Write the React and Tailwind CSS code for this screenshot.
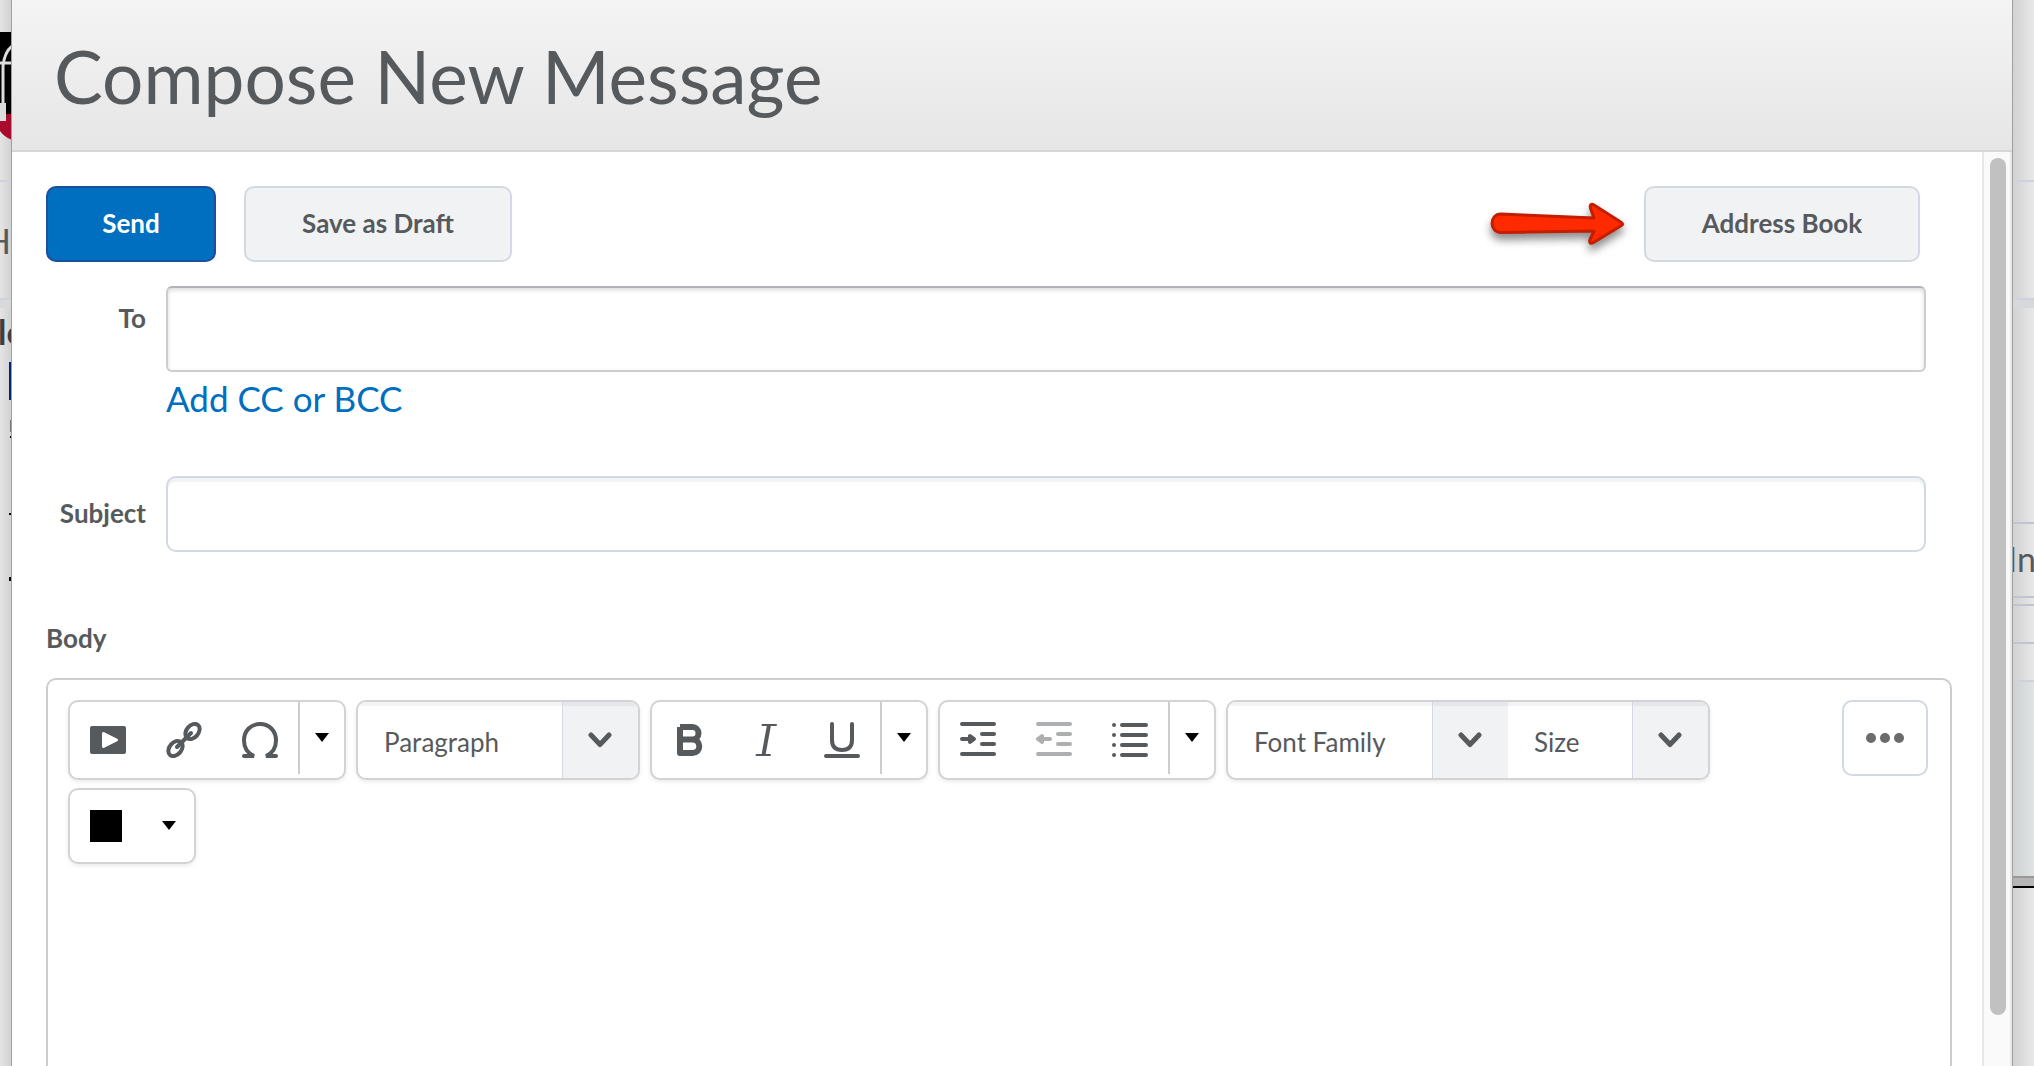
import React, { useState } from "react";

const Caret = () => (
  <svg width="14" height="10" viewBox="0 0 14 10" aria-hidden="true">
    <path d="M0 0h14L7 9z" fill="#000" />
  </svg>
);

const Chevron = () => (
  <svg width="24" height="16" viewBox="0 0 24 16" fill="none" aria-hidden="true">
    <path
      d="M3 3l9 9.500L21 3"
      stroke="#565a5c"
      strokeWidth="5"
      strokeLinecap="round"
      strokeLinejoin="round"
    />
  </svg>
);

const PlayIcon = () => (
  <svg width="36" height="36" viewBox="0 0 36 36" aria-hidden="true">
    <rect y="4" width="36" height="28" rx="2" fill="#565a5c" />
    <path
      d="M13.500 11.500v13l13-6.500z"
      fill="#fff"
      stroke="#fff"
      strokeWidth="3"
      strokeLinejoin="round"
    />
  </svg>
);

const LinkIcon = () => (
  <svg
    width="36"
    height="36"
    viewBox="0 0 36 36"
    fill="none"
    stroke="#565a5c"
    strokeWidth="4"
    aria-hidden="true"
  >
    <ellipse cx="26.500" cy="9.500" rx="6" ry="8.500" transform="rotate(40 26.500 9.500)" />
    <ellipse cx="9.500" cy="26.500" rx="6" ry="8.500" transform="rotate(40 9.500 26.500)" />
    <path d="M11 25L25 11" strokeLinecap="round" />
  </svg>
);

const OmegaIcon = () => (
  <svg
    width="36"
    height="36"
    viewBox="0 0 36 36"
    fill="none"
    stroke="#565a5c"
    strokeWidth="4"
    strokeLinecap="round"
    aria-hidden="true"
  >
    <path d="M2 34h10C5 31 2 25 2 18.500 2 8.500 9 2 18 2s16 6.500 16 16.500C34 25 31 31 24 34h10" />
  </svg>
);

const BoldIcon = () => (
  <svg width="36" height="36" viewBox="0 0 36 36" fill="none" aria-hidden="true">
    <path
      d="M8 5h12.500a6 6.200 0 0 1 0 12.400H8M20.500 17.400a6.800 6.800 0 0 1 0 13.600H8V5"
      stroke="#565a5c"
      strokeWidth="6"
      strokeLinejoin="round"
    />
  </svg>
);

const ItalicIcon = () => (
  <svg width="36" height="36" viewBox="0 0 36 36" fill="none" stroke="#565a5c" aria-hidden="true">
    <path d="M14.500 3H28M8.500 33H22" strokeWidth="2" strokeLinecap="round" />
    <path d="M21 3l-5.500 30" strokeWidth="4" />
  </svg>
);

const UnderlineIcon = () => (
  <svg
    width="36"
    height="36"
    viewBox="0 0 36 36"
    fill="none"
    stroke="#565a5c"
    strokeWidth="4"
    strokeLinecap="round"
    aria-hidden="true"
  >
    <path d="M2 34h32M8 2v16c0 7 3.500 10 10 10s10-3 10-10V2" />
  </svg>
);

const IndentIcon = () => (
  <svg width="36" height="36" viewBox="0 0 36 36" fill="none" stroke="#565a5c" aria-hidden="true">
    <path d="M2 2h32M22 12h12M22 22h12M2 32h32M2 17h8" strokeWidth="4" strokeLinecap="round" />
    <path d="M10 14v6l4-3z" fill="#565a5c" strokeWidth="4" strokeLinejoin="round" />
  </svg>
);

const OutdentIcon = () => (
  <svg width="36" height="36" viewBox="0 0 36 36" fill="none" stroke="#adafb0" aria-hidden="true">
    <path d="M2 2h32M22 12h12M22 22h12M2 32h32M6 17h8" strokeWidth="4" strokeLinecap="round" />
    <path d="M6 14v6l-4-3z" fill="#adafb0" strokeWidth="4" strokeLinejoin="round" />
  </svg>
);

const ListIcon = () => (
  <svg
    width="36"
    height="36"
    viewBox="0 0 36 36"
    stroke="#565a5c"
    strokeWidth="4"
    strokeLinecap="round"
    aria-hidden="true"
  >
    <path d="M10 3h24M10 13h24M10 23h24M10 33h24M2 3h0M2 13h0M2 23h0M2 33h0" />
  </svg>
);

const ArrowMark = () => (
  <svg className="mr-4 overflow-visible" width="138" height="48" viewBox="0 0 138 48" aria-hidden="true">
    <path
      d="M11 14L104 18l-3.500-9.500c-1-4 1-5 3.500-3.500l27.500 17.500c1.500 1.500 1.500 2 0 3L103.500 42.500c-3 2-4.500 0-3.500-3l4-8.500-93 1.500c-12 0-12-18.500 0-18.500z"
      fill="#ff2a00"
      stroke="#c41d00"
      strokeWidth="3"
      strokeLinejoin="round"
      className="drop-shadow-[0_6px_4px_rgba(0,0,0,0.45)]"
    />
  </svg>
);

const ToolbarGroup = ({ children }) => (
  <div className="flex h-20 overflow-hidden rounded-[10px] border-2 border-[#d3d3d3] bg-white shadow-[0_2px_4px_rgba(0,0,0,0.08)]">
    {children}
  </div>
);

const ToolButton = ({ label, children, disabled }) => (
  <button
    type="button"
    aria-label={label}
    disabled={disabled}
    className="flex w-[76px] items-center justify-center"
  >
    {children}
  </button>
);

const MoreButton = ({ label }) => (
  <button
    type="button"
    aria-label={label}
    className="mb-1 flex w-[46px] items-center justify-center border-l-2 border-[#cdcdcd]"
  >
    <Caret />
  </button>
);

const ToolSelect = ({ label, width }) => (
  <div className="grid shadow-[inset_0_4px_0_#f1f3f5]">
    <select
      aria-label={label}
      className={`col-start-1 row-start-1 appearance-none bg-transparent pt-1 pl-[26px] text-[26px] text-[#565a5c] ${width}`}
    >
      <option>{label}</option>
    </select>
    <span className="pointer-events-none col-start-1 row-start-1 flex w-[76px] items-center justify-center justify-self-end border-l border-[#d3d9e3] bg-[#f1f2f4] pr-0.5 shadow-[inset_0_4px_0_#e6e7eb]">
      <Chevron />
    </span>
  </div>
);

const buttonBase = "h-[76px] rounded-[10px] border-2 pb-0.5 text-[26px] font-bold";

const App = () => {
  const [to, setTo] = useState("");
  const [subject, setSubject] = useState("");

  return (
    <div className="flex h-screen overflow-hidden bg-[#e5e5e5] font-[Lato,sans-serif] text-[#565a5c]">
      {/* Page behind, left edge */}
      <div className="flex w-3 shrink-0 flex-col overflow-hidden border-r border-[#a0a0a0] bg-linear-to-r from-[#e4e4e4] to-[#d2d2d2]">
        <svg className="mt-8 shrink-0" width="12" height="108" viewBox="0 0 12 108" aria-hidden="true">
          <path d="M0 0h12v82H0z" fill="#000" />
          <path d="M0 82h12v26C7 106 3 103 0 99z" fill="#a80b2c" />
          <path d="M3 72V34C4 24 7 18 12 14M0 31h12" stroke="#dcdcdc" strokeWidth="3" fill="none" />
          <path d="M0 71h6v18H0z" fill="#dcdcdc" />
        </svg>
        <div className="mt-10 h-[120px] shrink-0 border-y-2 border-[#cfd2dc]">
          <div className="flex h-full items-center justify-end text-[34px]">H</div>
        </div>
        <div className="h-2 shrink-0 bg-[#d6d8da]" />
        <div className="mb-2 -ml-0.5 flex h-[46px] shrink-0 items-center text-[34px] font-bold text-[#3c3e40]">
          le
        </div>
        <div className="h-[38px] w-0.5 shrink-0 self-end bg-[#00237c]" />
        <div className="mt-5 h-3 w-px shrink-0 self-end bg-[#777]" />
        <div className="mt-1 h-0.5 w-px shrink-0 self-end bg-black" />
        <div className="mt-[75px] h-0.5 w-0.5 shrink-0 self-end bg-black" />
        <div className="mt-[62px] h-1 w-0.5 shrink-0 self-end bg-black" />
      </div>

      {/* Compose dialog */}
      <main className="flex min-w-0 flex-1 flex-col bg-white">
        <header className="flex h-[152px] shrink-0 items-center border-b-2 border-[#d6d6d6] bg-linear-to-b from-[#f4f4f4] to-[#e6e6e6] pt-0.5 pl-[42px]">
          <h1 className="text-[73px] leading-[88px]">Compose New Message</h1>
        </header>

        <div className="flex min-h-0 flex-1">
          <form className="flex min-w-0 flex-1 flex-col pt-[34px] pr-[30px] pl-[34px]">
            <div className="flex items-center pr-8">
              <button
                type="button"
                className={`${buttonBase} w-[170px] border-[#1c4f9c] bg-[#006fbf] text-white`}
              >
                Send
              </button>
              <button
                type="button"
                className={`${buttonBase} ml-7 w-[268px] border-[#d3d9e3] bg-[#f1f2f4]`}
              >
                Save as Draft
              </button>
              <div className="ml-auto flex items-center">
                <ArrowMark />
                <button
                  type="button"
                  className={`${buttonBase} w-[276px] border-[#d3d9e3] bg-[#f1f2f4]`}
                >
                  Address Book
                </button>
              </div>
            </div>

            <div className="mt-6 grid grid-cols-[100px_1fr] gap-x-5 pr-[26px]">
              <label htmlFor="to" className="pt-4 text-right text-[26px] leading-8 font-bold">
                To
              </label>
              <div>
                <input
                  id="to"
                  value={to}
                  onChange={(e) => setTo(e.target.value)}
                  className="block h-[86px] w-full rounded-md border-2 border-[#cdcdcd] border-t-[#b1b2b7] px-4 text-[26px] shadow-[inset_0_2px_4px_rgba(0,0,0,0.15)] outline-none"
                />
                <a href="#cc" className="mt-1.5 mb-0.5 inline-block text-[35px] leading-10 text-[#006fbf]">
                  Add CC or BCC
                </a>
              </div>
              <label
                htmlFor="subject"
                className="mt-14 self-center pb-0.5 text-right text-[26px] leading-8 font-bold"
              >
                Subject
              </label>
              <input
                id="subject"
                value={subject}
                onChange={(e) => setSubject(e.target.value)}
                className="mt-14 block h-[76px] w-full rounded-[10px] border-2 border-[#d3d9e3] px-4 text-[26px] shadow-[inset_0_4px_0_#f1f3f5] outline-none"
              />
            </div>

            <h2 className="mt-[70px] text-[26px] leading-8 font-bold">Body</h2>
            <div className="mt-6 flex flex-1 items-start justify-between rounded-t-[10px] border-2 border-b-0 border-[#cdcdcd] pt-5 pr-[22px] pl-5">
              <div className="flex flex-wrap gap-x-[10px] gap-y-2">
                <ToolbarGroup>
                  <ToolButton label="Insert stuff">
                    <PlayIcon />
                  </ToolButton>
                  <ToolButton label="Insert link">
                    <LinkIcon />
                  </ToolButton>
                  <ToolButton label="Insert symbol">
                    <OmegaIcon />
                  </ToolButton>
                  <MoreButton label="More insert options" />
                </ToolbarGroup>
                <ToolbarGroup>
                  <ToolSelect label="Paragraph" width="w-[280px]" />
                </ToolbarGroup>
                <ToolbarGroup>
                  <ToolButton label="Bold">
                    <BoldIcon />
                  </ToolButton>
                  <ToolButton label="Italic">
                    <ItalicIcon />
                  </ToolButton>
                  <ToolButton label="Underline">
                    <UnderlineIcon />
                  </ToolButton>
                  <MoreButton label="More text options" />
                </ToolbarGroup>
                <ToolbarGroup>
                  <ToolButton label="Indent">
                    <IndentIcon />
                  </ToolButton>
                  <ToolButton label="Outdent" disabled>
                    <OutdentIcon />
                  </ToolButton>
                  <ToolButton label="Bulleted list">
                    <ListIcon />
                  </ToolButton>
                  <MoreButton label="More list options" />
                </ToolbarGroup>
                <ToolbarGroup>
                  <ToolSelect label="Font Family" width="w-[280px]" />
                  <ToolSelect label="Size" width="w-[200px]" />
                </ToolbarGroup>
                <button
                  type="button"
                  aria-label="Text colour"
                  className="flex h-[76px] w-32 items-center justify-between rounded-[10px] border-2 border-[#d3d3d3] pr-[18px] pl-5 shadow-[0_2px_4px_rgba(0,0,0,0.08)]"
                >
                  <span className="h-8 w-8 bg-black" />
                  <Caret />
                </button>
              </div>
              <button
                type="button"
                aria-label="More actions"
                className="flex h-[76px] w-[86px] shrink-0 items-center justify-center gap-1 rounded-[10px] border-2 border-[#d3d9e3]"
              >
                <span className="h-[10px] w-[10px] rounded-full bg-[#6b6b6b]" />
                <span className="h-[10px] w-[10px] rounded-full bg-[#6b6b6b]" />
                <span className="h-[10px] w-[10px] rounded-full bg-[#6b6b6b]" />
              </button>
            </div>
          </form>

          {/* Scrollbar */}
          <div className="w-[30px] shrink-0 border-r-2 border-l-2 border-[#e8e8e8] bg-[#fafafa] pt-[6px] pr-1 pl-[6px]">
            <div className="h-[94.4%] rounded-full bg-[#c1c1c1]" />
          </div>
        </div>
      </main>

      {/* Page behind, right edge */}
      <div className="flex w-[22px] shrink-0 flex-col overflow-hidden border-l border-[#a0a0a0] bg-linear-to-r from-[#d2d2d2] to-[#e8e8e8]">
        <div className="mt-[180px] h-[120px] shrink-0 border-y-2 border-[#cfd2dc]" />
        <div className="h-2 shrink-0 bg-[#d6d8da]" />
        <div className="mt-[214px] -mr-0.5 flex h-[76px] shrink-0 items-center justify-end border-y-2 border-[#c0c5d3] pb-1 text-[34px]">
          In
        </div>
        <div className="mt-[6px] h-10 shrink-0 border-y-2 border-[#c0c5d3]" />
        <div className="mt-9 h-0.5 shrink-0 bg-[#cfd2dc]" />
        <div className="h-[194px] shrink-0 bg-linear-to-r from-[#cfd2d2] to-[#e0e3e3]" />
        <div className="h-3 shrink-0 border-t-2 border-b-2 border-t-[#989898] border-b-black bg-[#b5b5b5]" />
      </div>
    </div>
  );
};

export default App;
